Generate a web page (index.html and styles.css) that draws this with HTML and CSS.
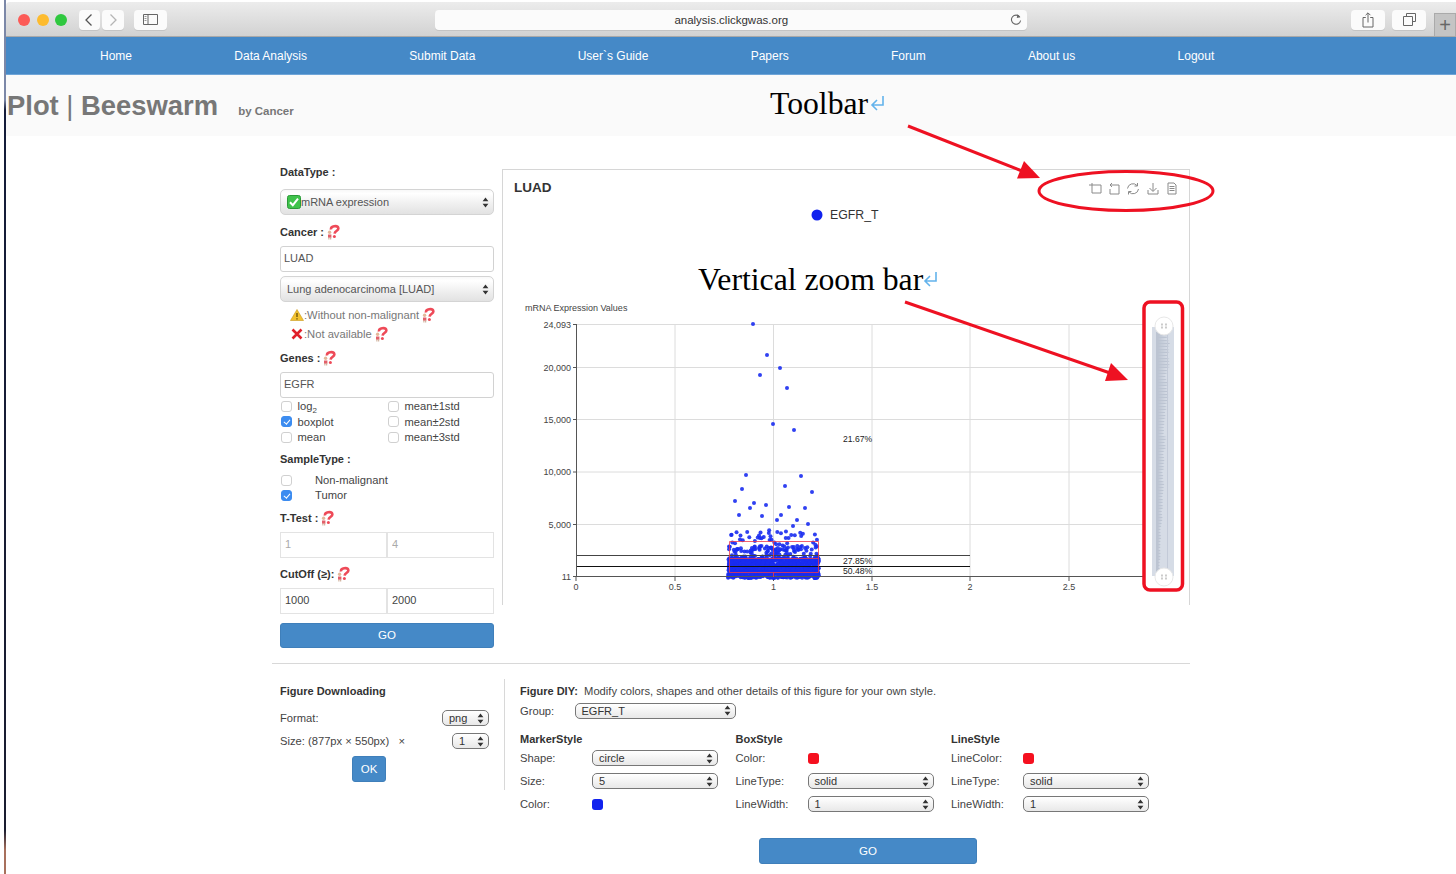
FILE: index.html
```html
<!DOCTYPE html>
<html lang="en">
<head>
  <meta charset="UTF-8" />
  <title>Plot | Beeswarm</title>
  <link rel="stylesheet" href="styles.css">
</head>
<body>

<!-- shared icons -->
<svg class="defs" width="0" height="0">
  <symbol id="help" viewBox="0 0 14 16">
    <path d="M5 5.5C4.5 2 11.5 1 12.3 4C13 6.6 8.8 6.6 8.6 9.6" fill="none" stroke="#ee4a58" stroke-width="2.6"/>
    <circle cx="8.4" cy="12.4" r="1.5" fill="#ee4a58"/>
    <circle cx="3.6" cy="8.2" r="1.7" fill="#e3b79a"/>
    <path d="M2 10.5h3.4v3.2H2z" fill="#e2606a"/>
    <path d="M2.4 13.6h1v2h-1zM4.2 13.6h1v2h-1z" fill="#c9a58d"/>
  </symbol>
  <symbol id="updown" viewBox="0 0 7 11">
    <path d="M3.5 0.5L6.4 4.3H.6zM3.5 10.5L.6 6.7h5.8z" fill="#333"/>
  </symbol>
</svg>

<div class="window">

  <div class="safari">
    <span class="light red"></span>
    <span class="light yellow"></span>
    <span class="light green"></span>
    <div class="tb-btn back">
      <svg width="10" height="14" viewBox="0 0 10 14"><path d="M7.5 1.5L2 7l5.5 5.5" fill="none" stroke="#555" stroke-width="1.3"/></svg>
    </div>
    <div class="tb-btn forward">
      <svg width="10" height="14" viewBox="0 0 10 14"><path d="M2.5 1.5L8 7l-5.5 5.5" fill="none" stroke="#b5b5b5" stroke-width="1.3"/></svg>
    </div>
    <div class="tb-btn sidebar">
      <svg width="15" height="11" viewBox="0 0 15 11"><path d="M.5.5h14v10H.5zM5 .5v10" fill="none" stroke="#666"/><path d="M1.5 2.5h2M1.5 4.5h2M1.5 6.5h2" stroke="#999"/></svg>
    </div>
    <div class="address">
      <span>analysis.clickgwas.org</span>
      <svg class="reload" width="12" height="13" viewBox="0 0 12 13"><path d="M9.8 4A4.6 4.6 0 1 0 10.6 7.5" fill="none" stroke="#666" stroke-width="1.1"/><path d="M7.4 1.2L10.4 4.2 6.8 5z" fill="#666"/></svg>
    </div>
    <div class="tb-btn share">
      <svg width="12" height="16" viewBox="0 0 12 16"><path d="M3.8 5.5H1v9.5h10V5.5H8.2M6 10.5V1M3.6 3.2L6 .8l2.4 2.4" fill="none" stroke="#666"/></svg>
    </div>
    <div class="tb-btn tabs">
      <svg width="13" height="13" viewBox="0 0 13 13"><path d="M3.5 3V.5h9v8H10M.5 3.5h9v9h-9z" fill="none" stroke="#666"/></svg>
    </div>
    <div class="new-tab">+</div>
  </div>

  <nav class="nav">
    <a>Home</a>
    <a>Data Analysis</a>
    <a>Submit Data</a>
    <a>User`s Guide</a>
    <a>Papers</a>
    <a>Forum</a>
    <a>About us</a>
    <a>Logout</a>
  </nav>

  <header class="title-band">
    <h1>Plot <span class="pipe">|</span> Beeswarm</h1>
    <small>by Cancer</small>
  </header>

  <main class="main">
    <form class="side">
      <div class="lbl">DataType :</div>
      <div class="sel sel-big mt9">
        <svg class="okbox" width="14" height="14" viewBox="0 0 14 14"><rect x=".5" y=".5" width="13" height="13" rx="2" fill="#3fc24b" stroke="#2b9a38"/><path d="M3 7.2l2.8 3L11 3.6" fill="none" stroke="#fff" stroke-width="2"/></svg>
        <span>mRNA expression</span>
        <svg class="arrows"><use href="#updown"/></svg>
      </div>

      <div class="lbl mt9">Cancer :<svg class="help"><use href="#help"/></svg></div>
      <input class="txt mt6" type="text" value="LUAD">
      <div class="sel sel-big mt4">
        <span>Lung adenocarcinoma [LUAD]</span>
        <svg class="arrows"><use href="#updown"/></svg>
      </div>
      <div class="note mt5">
        <svg width="14" height="12" viewBox="0 0 14 12"><path d="M7 .5L13.5 11.5H.5z" fill="#f2c230" stroke="#c9971a" stroke-width=".6"/><path d="M7 4v4M7 9.2v1.2" stroke="#5a4300" stroke-width="1.2"/></svg>
        <span>:Without non-malignant</span>
        <svg class="help"><use href="#help"/></svg>
      </div>
      <div class="note mt3">
        <svg class="cross" width="12" height="12" viewBox="0 0 12 12"><path d="M1.5 1.5l9 9M10.5 1.5l-9 9" stroke="#e0202a" stroke-width="2.6"/></svg>
        <span>:Not available</span>
        <svg class="help"><use href="#help"/></svg>
      </div>

      <div class="lbl mt8">Genes :<svg class="help"><use href="#help"/></svg></div>
      <input class="txt mt6" type="text" value="EGFR">
      <div class="checks">
        <label><input type="checkbox"><span>log<sub>2</sub></span></label>
        <label><input type="checkbox"><span>mean±1std</span></label>
        <label><input type="checkbox" checked><span>boxplot</span></label>
        <label><input type="checkbox"><span>mean±2std</span></label>
        <label><input type="checkbox"><span>mean</span></label>
        <label><input type="checkbox"><span>mean±3std</span></label>
      </div>

      <div class="lbl mt6">SampleType :</div>
      <div class="samples mt6">
        <label><input type="checkbox"><span>Non-malignant</span></label>
        <label><input type="checkbox" checked><span>Tumor</span></label>
      </div>

      <div class="lbl mt7">T-Test :<svg class="help"><use href="#help"/></svg></div>
      <div class="pair mt6">
        <input class="txt muted" type="text" value="1">
        <input class="txt muted" type="text" value="4">
      </div>

      <div class="lbl mt8">CutOff (≥):<svg class="help"><use href="#help"/></svg></div>
      <div class="pair mt6">
        <input class="txt" type="text" value="1000">
        <input class="txt" type="text" value="2000">
      </div>

      <button class="btn go-side" type="button">GO</button>
    </form>

    <section class="chart">
      <svg id="plot" width="688" height="436" viewBox="502 169 688 436"></svg>
    </section>
  </main>

  <hr class="divider">

  <section class="bottom">
    <div class="download">
      <div class="lbl">Figure Downloading</div>
      <div class="dl-row first">
        <span>Format:</span>
        <div class="sel sel-small w47"><span>png</span><svg class="arrows"><use href="#updown"/></svg></div>
      </div>
      <div class="dl-row">
        <span>Size: (877px × 550px) &nbsp; ×</span>
        <div class="sel sel-small w37"><span>1</span><svg class="arrows"><use href="#updown"/></svg></div>
      </div>
      <button class="btn ok" type="button">OK</button>
    </div>

    <div class="vline"></div>

    <div class="diy">
      <div class="diy-head"><b>Figure DIY:</b>&nbsp; Modify colors, shapes and other details of this figure for your own style.</div>
      <div class="diy-group">
        <span>Group:</span>
        <div class="sel sel-small w161"><span>EGFR_T</span><svg class="arrows"><use href="#updown"/></svg></div>
      </div>
      <div class="diy-grid">
        <div>
          <div class="lbl">MarkerStyle</div>
          <div class="style-row"><span>Shape:</span><div class="sel sel-small w126"><span>circle</span><svg class="arrows"><use href="#updown"/></svg></div></div>
          <div class="style-row"><span>Size:</span><div class="sel sel-small w126"><span>5</span><svg class="arrows"><use href="#updown"/></svg></div></div>
          <div class="style-row"><span>Color:</span><i class="swatch blue"></i></div>
        </div>
        <div>
          <div class="lbl">BoxStyle</div>
          <div class="style-row"><span>Color:</span><i class="swatch redc"></i></div>
          <div class="style-row"><span>LineType:</span><div class="sel sel-small w126"><span>solid</span><svg class="arrows"><use href="#updown"/></svg></div></div>
          <div class="style-row"><span>LineWidth:</span><div class="sel sel-small w126"><span>1</span><svg class="arrows"><use href="#updown"/></svg></div></div>
        </div>
        <div>
          <div class="lbl">LineStyle</div>
          <div class="style-row"><span>LineColor:</span><i class="swatch redc"></i></div>
          <div class="style-row"><span>LineType:</span><div class="sel sel-small w126"><span>solid</span><svg class="arrows"><use href="#updown"/></svg></div></div>
          <div class="style-row"><span>LineWidth:</span><div class="sel sel-small w126"><span>1</span><svg class="arrows"><use href="#updown"/></svg></div></div>
        </div>
      </div>
    </div>
  </section>

  <button class="btn go-bottom" type="button">GO</button>
</div>

<!-- red notes drawn on top of the screenshot -->
<svg class="notes" width="1456" height="874" viewBox="0 0 1456 874">
  <text class="note-text" x="770" y="114">Toolbar</text>
  <path d="M883 96v9h-10M877 100l-5 5 5 5" fill="none" stroke="#63b3ec" stroke-width="1.6"/>
  <text class="note-text" x="698" y="290">Vertical zoom bar</text>
  <path d="M936 272v9h-10M930 276l-5 5 5 5" fill="none" stroke="#63b3ec" stroke-width="1.6"/>
  <path d="M908 126L1022 171" stroke="#ee1122" stroke-width="3" fill="none"/>
  <path d="M1040 178L1017 178.5L1024 161z" fill="#ee1122"/>
  <path d="M905 302L1110 373" stroke="#ee1122" stroke-width="3" fill="none"/>
  <path d="M1128 380L1105 381L1111 363z" fill="#ee1122"/>
  <ellipse cx="1126" cy="191" rx="87" ry="19.5" fill="none" stroke="#ee1122" stroke-width="3"/>
  <rect x="1144" y="302" width="38.5" height="288" rx="6" fill="none" stroke="#ee1122" stroke-width="3.5"/>
</svg>

<script src="plot.js"></script>
</body>
</html>
```

FILE: styles.css
```css
html, body {
  margin: 0;
  padding: 0;
}
body {
  font-family: "Liberation Sans", Arial, sans-serif;
  font-size: 11.2px;
  color: #444;
  background: #fff;
  width: 1456px;
  height: 874px;
  overflow: hidden;
  position: relative;
}
.defs {
  position: absolute;
}
.window {
  margin-left: 4px;
  padding-left: 2px;
  padding-top: 2px;
  height: 874px;
  box-sizing: border-box;
  overflow: hidden;
  background: #fff linear-gradient(#7c88a8 0, #7c88a8 100px, #141c3a 110px, #1a1d30 830px, #a8705c 850px) left top / 2px 100% no-repeat;
}
.mt3 { margin-top: 3px; }
.mt4 { margin-top: 4px; }
.mt5 { margin-top: 5px; }
.mt6 { margin-top: 6px; }
.mt7 { margin-top: 7px; }
.mt8 { margin-top: 8px; }
.mt9 { margin-top: 9px; }

/* browser chrome */
.safari {
  height: 35px;
  display: flex;
  align-items: center;
  background: linear-gradient(#ececec, #d2d2d2);
  border-bottom: 1px solid #a9a9a9;
  box-sizing: border-box;
  padding-left: 12px;
  padding-top: 1px;
  border-top-left-radius: 4px;
  position: relative;
}
.light {
  width: 12px;
  height: 12px;
  border-radius: 50%;
  margin-right: 6.5px;
}
.light.red { background: #fc5b57; }
.light.yellow { background: #fdbb2e; }
.light.green { background: #2fc83f; }
.tb-btn {
  height: 20px;
  background: #fbfbfb;
  border-radius: 4px;
  box-shadow: 0 1px 0 #c4c4c4;
  display: flex;
  align-items: center;
  justify-content: center;
}
.back { width: 22px; margin-left: 5px; }
.forward { width: 22px; margin-left: 2px; }
.sidebar { width: 33px; margin-left: 10px; }
.address {
  width: 592px;
  height: 20px;
  margin-left: 268px;
  background: #fbfbfb;
  border-radius: 4px;
  box-shadow: 0 1px 0 #c4c4c4;
  display: flex;
  align-items: center;
  justify-content: center;
  font-size: 11.5px;
  color: #333;
  position: relative;
}
.reload {
  position: absolute;
  right: 5px;
  top: 3px;
}
.share { width: 34px; margin-left: 324px; }
.tabs { width: 34px; margin-left: 7px; }
.new-tab {
  width: 22px;
  height: 23px;
  margin-left: 8px;
  align-self: flex-end;
  background: #c4c4c4;
  border: 1px solid #aaa;
  border-bottom: 0;
  box-sizing: border-box;
  text-align: center;
  font-size: 20px;
  line-height: 23px;
  color: #666;
}

/* site nav */
.nav {
  height: 38px;
  background: #4589c7;
  border-bottom: 1px solid #6fa5d8;
  box-sizing: border-box;
  display: flex;
  align-items: center;
  gap: 102.3px;
  padding-left: 94px;
  color: #fff;
  font-size: 12px;
}
.title-band {
  height: 61px;
  background: #fafafa;
  padding-left: 1px;
  display: flex;
  align-items: baseline;
  color: #777;
}
.title-band h1 {
  margin: 14px 0 0;
  font-size: 27.4px;
  line-height: 33px;
  font-weight: bold;
}
.title-band .pipe {
  font-weight: normal;
}
.title-band small {
  margin-left: 20px;
  font-size: 11.5px;
  font-weight: bold;
}

/* main row */
.main {
  display: flex;
  align-items: flex-start;
  padding: 28px 0 0 274px;
}
.side {
  width: 214px;
  margin: 0 8px 0 0;
}
.lbl {
  font-weight: bold;
  line-height: 16px;
  height: 16px;
  font-size: 11px;
  color: #333;
  display: flex;
  align-items: center;
  white-space: pre;
}
.lbl .help {
  margin-left: 1.5px;
}
.help {
  width: 14px;
  height: 16px;
  flex: none;
}
.sel {
  position: relative;
  display: flex;
  align-items: center;
  box-sizing: border-box;
  white-space: nowrap;
}
.sel-big {
  height: 26px;
  padding-left: 6px;
  padding-bottom: 1px;
  border: 1px solid #d4d4d4;
  border-radius: 5px;
  background: linear-gradient(#f8f8f8, #fff 15%, #efefef 60%, #e2e2e2);
  color: #555;
  font-size: 11px;
}
.sel .arrows {
  position: absolute;
  right: 4px;
  top: 50%;
  width: 7px;
  height: 11px;
  margin-top: -5.5px;
}
.okbox {
  flex: none;
}
.txt {
  display: block;
  width: 100%;
  height: 26px;
  box-sizing: border-box;
  margin-left: 0;
  margin-right: 0;
  padding: 0 3px 2px;
  border: 1px solid #d2d2d2;
  border-radius: 3px;
  font: 11px "Liberation Sans", Arial, sans-serif;
  color: #555;
  outline: none;
}
.note {
  height: 16px;
  padding-left: 10px;
  display: flex;
  align-items: center;
  color: #777;
}
.note .cross {
  margin-left: 1px;
  margin-right: 1px;
}
.note .help {
  margin-left: 2px;
}
.checks {
  display: grid;
  grid-template-columns: 107px 107px;
  grid-auto-rows: 15.5px;
  padding-top: 0.5px;
  height: 46px;
}
.checks label, .samples label {
  display: flex;
  align-items: center;
  color: #444;
}
.checks sub {
  font-size: 8px;
  line-height: 0;
}
.samples label {
  height: 15px;
}
input[type="checkbox"] {
  appearance: none;
  -webkit-appearance: none;
  position: relative;
  width: 11px;
  height: 11px;
  margin: 0 5.5px 0 1px;
  border: 1px solid #d0d0d0;
  border-radius: 3px;
  background: #fff;
  flex: none;
}
input[type="checkbox"]:checked {
  background: #3c8cf0;
  border-color: #3c8cf0;
}
input[type="checkbox"]:checked::after {
  content: "";
  position: absolute;
  left: 3px;
  top: 1px;
  width: 2.5px;
  height: 5px;
  border: solid #fff;
  border-width: 0 1.2px 1.2px 0;
  transform: rotate(40deg);
}
.samples input[type="checkbox"] {
  margin-right: 23px;
}
.pair {
  display: flex;
}
.pair .txt {
  width: 107px;
  padding-left: 4px;
  border-color: #e3e3e3;
  border-radius: 0;
  color: #444;
}
.pair .txt.muted {
  color: #aaa;
}
.btn {
  display: block;
  border: 1px solid #3f7fba;
  border-radius: 3px;
  background: #4589c7;
  color: #fff;
  font: 11.5px "Liberation Sans", Arial, sans-serif;
  padding: 0;
}
.go-side {
  width: 214px;
  height: 25px;
  margin-top: 9px;
}
.chart {
  width: 688px;
  height: 436px;
  margin-top: 5px;
  box-sizing: border-box;
  position: relative;
  flex: none;
}
.chart svg {
  display: block;
}

/* bottom part */
.divider {
  width: 918px;
  height: 1px;
  margin: 15px 0 0 266px;
  border: 0;
  background: #d8d8d8;
}
.bottom {
  display: flex;
  align-items: flex-start;
  padding: 19px 0 0 274px;
  height: 133px;
  box-sizing: content-box;
}
.download {
  width: 209px;
  margin-right: 15px;
}
.dl-row {
  height: 23px;
  display: flex;
  align-items: center;
  justify-content: space-between;
  color: #444;
}
.dl-row.first {
  margin-top: 8px;
}
.sel-small {
  height: 16px;
  padding-left: 6px;
  border: 1.5px solid #777;
  border-radius: 5px;
  background: linear-gradient(#fff, #e8e8e8);
  color: #333;
  font-size: 11px;
}
.w37 { width: 37px; }
.w47 { width: 47px; }
.w126 { width: 126px; }
.w161 { width: 161px; }
.ok {
  width: 34px;
  height: 26px;
  margin: 3px 0 0 72px;
}
.vline {
  width: 1px;
  height: 111px;
  margin-top: -4px;
  background: #d8d8d8;
  flex: none;
}
.diy {
  margin-left: 15px;
  color: #444;
}
.diy-head {
  line-height: 16px;
}
.diy-head b {
  color: #333;
  font-size: 11px;
}
.diy-group {
  display: flex;
  align-items: center;
  height: 16px;
  margin-top: 4px;
}
.diy-group span:first-child {
  width: 54.5px;
}
.diy-grid {
  display: grid;
  grid-template-columns: repeat(3, 215.5px);
  margin-top: 12px;
}
.style-row {
  height: 23px;
  display: flex;
  align-items: center;
}
.style-row > span:first-child {
  width: 72px;
}
.swatch {
  display: block;
  width: 11px;
  height: 11px;
  border-radius: 3px;
}
.swatch.blue { background: #1122ee; }
.swatch.redc { background: #f5101f; }
.go-bottom {
  width: 218px;
  height: 26px;
  margin: 22px 0 0 753px;
}

/* annotations laid over the page */
.notes {
  position: absolute;
  left: 0;
  top: 0;
  pointer-events: none;
}
.note-text {
  font-family: "Liberation Serif", "Times New Roman", serif;
  font-size: 31.7px;
  fill: #000;
}
```

FILE: plot.js
```js
const svg = document.getElementById('plot');
const NS = 'http://www.w3.org/2000/svg';

function add(tag, attrs, text) {
  const el = document.createElementNS(NS, tag);
  for (const k in attrs) el.setAttribute(k, attrs[k]);
  if (text) el.textContent = text;
  svg.appendChild(el);
  return el;
}

function line(x1, y1, x2, y2, color, w) {
  add('line', { x1, y1, x2, y2, stroke: color, 'stroke-width': w || 1 });
}

// small seeded random so the swarm stays the same on each run
let seed = 4242;
function rnd() {
  seed = (seed * 16807) % 2147483647;
  return seed / 2147483647;
}

const FONT = '"Liberation Sans", Arial, sans-serif';

function label(x, y, str, size, color, anchor, weight) {
  add('text', {
    x, y,
    'font-family': FONT,
    'font-size': size,
    fill: color,
    'text-anchor': anchor || 'start',
    'font-weight': weight || 'normal'
  }, str);
}

// chart frame
line(502, 169.5, 1190, 169.5, '#d6d6d6');
line(502.5, 169, 502.5, 605, '#d6d6d6');
line(1189.5, 169, 1189.5, 605, '#d6d6d6');

label(514, 192, 'LUAD', 13.5, '#333', 'start', 'bold');
add('circle', { cx: 817, cy: 215, r: 5.5, fill: '#1122ee' });
label(830, 219, 'EGFR_T', 12.3, '#333');
label(525, 311, 'mRNA Expression Values', 9, '#444');

// toolbar icons
const icons = [
  [1090, 'M2 0V10H11V2H-1'],
  [1108, 'M4 0L2 2L4 4M2 2H11V11H2V6'],
  [1127, 'M.5 5.5A5.5 5.5 0 0 1 10 2.5M11.5 6A5.5 5.5 0 0 1 2 9M10.5 0V3H7.5M1.5 11.500V8.500H4.500'],
  [1147, 'M6 0V8M2.5 5L6 8.5L9.5 5M1 7V11H11V7'],
  [1166, 'M2 0H8L10 2V11H2ZM3.5 3.5H8.5M3.5 5.5H8.5M3.5 7.5H8.5']
];
icons.forEach(([x, d]) => {
  add('path', { d, fill: 'none', stroke: '#8a8a8a', 'stroke-width': 1, transform: `translate(${x},183)` });
});

// grid
const xs = [[576, '0'], [675, '0.5'], [773.5, '1'], [872, '1.5'], [970, '2'], [1069, '2.5'], [1167, '']];
const ys = [[324.5, '24,093'], [367.5, '20,000'], [419.5, '15,000'], [472, '10,000'], [524.5, '5,000'], [576.5, '11']];

xs.forEach(([x]) => { if (x > 576) line(x, 324, x, 576, '#dcdcdc'); });
ys.forEach(([y]) => { if (y < 576) line(576, y, 1145, y, '#dcdcdc'); });

xs.forEach(([x, t]) => {
  if (t) {
    line(x, 576, x, 581, '#555');
    label(x, 590, t, 9, '#444', 'middle');
  }
});
ys.forEach(([y, t]) => {
  line(573, y, 576, y, '#555');
  label(571, y + 3, t, 9, '#444', 'end');
});

// swarm
const dots = [
  [753, 324], [767, 355], [780, 368], [760, 375], [787, 388], [773, 424], [794, 430],
  [746, 475], [801, 476], [742, 489], [785, 486], [812, 492], [735, 501], [754, 503],
  [766, 505], [750, 508], [739, 515], [762, 516], [781, 515], [789, 507], [805, 508],
  [777, 520], [797, 520], [808, 524], [793, 526]
];
for (let i = 0; i < 55; i++) {
  dots.push([731 + rnd() * 86, 528 + rnd() * 22]);
}
for (let i = 0; i < 90; i++) {
  dots.push([729 + rnd() * 90, 546 + rnd() * 12]);
}
for (let i = 0; i < 1100; i++) {
  dots.push([728 + rnd() * 91, 558 + rnd() * 20]);
}
dots.forEach(([cx, cy]) => {
  add('circle', { cx, cy, r: 2, fill: '#1a2cf0', 'fill-opacity': 0.9 });
});

// mean lines and box
line(576, 555.5, 970, 555.5, '#444');
line(576, 566.5, 970, 566.5, '#111');
line(576, 576.5, 1145, 576.5, '#555');
line(576.5, 324, 576.5, 576, '#555');

const red = { fill: 'none', stroke: '#f03a4a', 'stroke-width': 0.8 };
add('path', Object.assign({ d: 'M729.5 541.5H818.5V558.5H729.5ZM729.5 558.5V572.5H818.5V558.5M773.5 541.5V558.5M773.5 572.5V577' }, red));

label(843, 442, '21.67%', 8.6, '#222');
label(843, 564, '27.85%', 8.6, '#222');
label(843, 574, '50.48%', 8.6, '#222');

// vertical zoom bar
add('rect', { x: 1152, y: 327, width: 22, height: 249, fill: '#d6dce6' });
let left = 'M1156 332';
for (let y = 332; y < 572; y += 3) {
  const t = (y - 332) / 240;
  const w = (14 - 12 * t) * (0.55 + rnd() * 0.45);
  left += `L${(1158 + w).toFixed(1)} ${y}L1158 ${y + 1}L${(1158 + w).toFixed(1)} ${y + 2}`;
}
add('path', { d: left + 'L1156 572Z', fill: '#bcc4d2' });
line(1167.5, 330, 1167.5, 574, '#c3cad8');

[326, 577].forEach(cy => {
  add('circle', { cx: 1164, cy, r: 9, fill: '#fff', stroke: '#e8e8e8' });
  add('path', { d: `M1162 ${cy - 2.5}v5M1166 ${cy - 2.5}v5`, stroke: '#aaa', 'stroke-width': 1.2, 'stroke-dasharray': '2 1' });
});
```
